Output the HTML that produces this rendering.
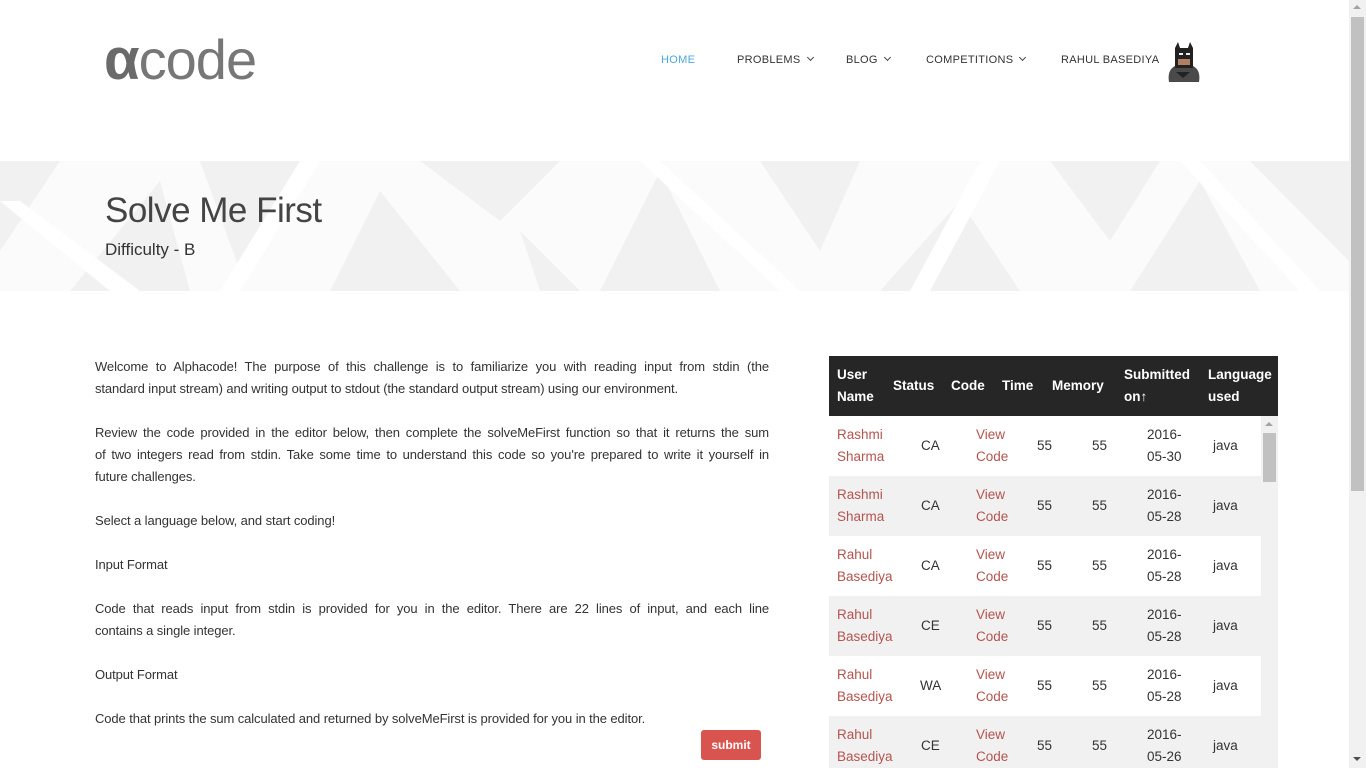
<!DOCTYPE html>
<html style="overflow:hidden"><head><meta charset="utf-8"><style>
*{margin:0;padding:0;box-sizing:border-box}
body{width:1366px;height:768px;overflow:hidden;background:#fff;font-family:"Liberation Sans",sans-serif;color:#333;position:relative}
.abs{position:absolute}
.logo{left:104px;top:26px;font-size:56px;color:#777;font-weight:normal;letter-spacing:-1px}
.logo b{font-weight:bold;font-size:58px;color:#6a6a6a}
.nav{top:54px;font-size:11px;color:#333;letter-spacing:0.3px}
.chev{display:inline-block;width:5px;height:5px;border-right:1px solid #444;border-bottom:1px solid #444;transform:rotate(45deg);margin-left:7px;position:relative;top:-3px}
.hero{left:0;top:161px;width:1349px;height:130px;background:#fbfbfb;overflow:hidden}
.desc{left:95px;top:356px;width:674px;font-size:13px;line-height:22px;color:#333;letter-spacing:-0.1px}
.desc p{margin-bottom:22px}
.j{display:block;text-align:justify;text-align-last:justify;white-space:nowrap}
.thead{left:829px;top:356px;width:449px;height:60px;background:#262626;color:#fff;font-weight:bold;font-size:13.5px;line-height:22px}
.thead div{position:absolute}
.row{position:absolute;left:829px;width:432px;height:60px;font-size:13.5px;line-height:22px;color:#333}
.row div{position:absolute}
.red{color:#b5544f}
.sb{left:1261px;top:416px;width:17px;height:352px;background:#f1f1f1}
.psb{left:1349px;top:0;width:17px;height:768px;background:#f1f1f1}
</style></head><body>
<div class="abs logo"><b>α</b>code</div>
<div class="abs nav" style="left:661px;color:#4aa8e0">HOME</div>
<div class="abs nav" style="left:737px">PROBLEMS<span class="chev"></span></div>
<div class="abs nav" style="left:846px">BLOG<span class="chev"></span></div>
<div class="abs nav" style="left:926px">COMPETITIONS<span class="chev"></span></div>
<div class="abs nav" style="left:1061px">RAHUL BASEDIYA</div>
<svg class="abs" style="left:1163px;top:42px" width="42" height="40" viewBox="0 0 42 40">
<path d="M6 40 Q4 28 12 24 L30 24 Q38 28 36 40Z" fill="#4a4a4a"/>
<path d="M13 30 L20 36 L27 30Z" fill="#222"/>
<path d="M12 26 L12 6 L15 0 L17 6 L25 6 L27 0 L30 6 L30 26Z" fill="#222"/>
<rect x="15" y="17" width="12" height="6" fill="#b08060"/>
<rect x="16" y="11" width="4" height="2" fill="#eee"/><rect x="23" y="11" width="4" height="2" fill="#eee"/>
</svg>
<div class="abs hero">
<svg width="1349" height="130">
<g fill="#f1f1f1">
<polygon points="0,0 60,0 0,90"/><polygon points="70,130 160,20 190,130"/><polygon points="200,0 300,0 240,110"/>
<polygon points="330,130 380,30 460,130"/><polygon points="420,0 560,0 500,60"/><polygon points="600,130 660,10 720,130"/>
<polygon points="760,0 860,0 820,90"/><polygon points="880,130 960,40 1020,130"/><polygon points="1050,0 1160,0 1110,80"/>
<polygon points="1130,130 1200,20 1260,130"/><polygon points="1250,0 1349,0 1349,100"/><polygon points="540,130 520,70 580,130"/>
</g>
<g fill="#fff">
<polygon points="0,40 20,40 140,130 110,130"/><polygon points="300,0 320,0 240,130 220,130"/><polygon points="640,0 660,0 800,130 780,130"/><polygon points="980,0 1000,0 930,130 910,130"/><polygon points="1180,0 1200,0 1320,130 1300,130"/>
</g>
</svg>
<div class="abs" style="left:105px;top:30px;font-size:35px;color:#444;letter-spacing:-0.5px">Solve Me First</div>
<div class="abs" style="left:105px;top:79px;font-size:17px;color:#333">Difficulty - B</div>
</div>
<div class="abs desc">
<p><span class="j">Welcome to Alphacode! The purpose of this challenge is to familiarize you with reading input from stdin (the</span>standard input stream) and writing output to stdout (the standard output stream) using our environment.</p>
<p><span class="j">Review the code provided in the editor below, then complete the solveMeFirst function so that it returns the sum</span><span class="j">of two integers read from stdin. Take some time to understand this code so you're prepared to write it yourself in</span>future challenges.</p>
<p>Select a language below, and start coding!</p>
<p>Input Format</p>
<p><span class="j">Code that reads input from stdin is provided for you in the editor. There are 22 lines of input, and each line</span>contains a single integer.</p>
<p>Output Format</p>
<p>Code that prints the sum calculated and returned by solveMeFirst is provided for you in the editor.</p>
</div>
<div class="abs" style="left:701px;top:730px;width:60px;height:30px;background:#d9534f;color:#fff;font-size:12px;font-weight:bold;text-align:center;line-height:30px;border-radius:3px">submit</div>
<div class="abs thead">
<div style="left:8px;top:8px">User<br>Name</div>
<div style="left:64px;top:19px">Status</div>
<div style="left:122px;top:19px">Code</div>
<div style="left:173px;top:19px">Time</div>
<div style="left:223px;top:19px">Memory</div>
<div style="left:295px;top:8px">Submitted<br>on↑</div>
<div style="left:379px;top:8px">Language<br>used</div>
</div>
<div class="row" style="top:416px;background:#fff"><div class="red" style="left:8px;top:8px">Rashmi<br>Sharma</div><div style="left:92px;top:19px">CA</div><div class="red" style="left:147px;top:8px">View<br>Code</div><div style="left:208px;top:19px">55</div><div style="left:263px;top:19px">55</div><div style="left:318px;top:8px;text-align:center">2016-<br>05-30</div><div style="left:384px;top:19px">java</div></div>
<div class="row" style="top:476px;background:#f1f1f1"><div class="red" style="left:8px;top:8px">Rashmi<br>Sharma</div><div style="left:92px;top:19px">CA</div><div class="red" style="left:147px;top:8px">View<br>Code</div><div style="left:208px;top:19px">55</div><div style="left:263px;top:19px">55</div><div style="left:318px;top:8px;text-align:center">2016-<br>05-28</div><div style="left:384px;top:19px">java</div></div>
<div class="row" style="top:536px;background:#fff"><div class="red" style="left:8px;top:8px">Rahul<br>Basediya</div><div style="left:92px;top:19px">CA</div><div class="red" style="left:147px;top:8px">View<br>Code</div><div style="left:208px;top:19px">55</div><div style="left:263px;top:19px">55</div><div style="left:318px;top:8px;text-align:center">2016-<br>05-28</div><div style="left:384px;top:19px">java</div></div>
<div class="row" style="top:596px;background:#f1f1f1"><div class="red" style="left:8px;top:8px">Rahul<br>Basediya</div><div style="left:92px;top:19px">CE</div><div class="red" style="left:147px;top:8px">View<br>Code</div><div style="left:208px;top:19px">55</div><div style="left:263px;top:19px">55</div><div style="left:318px;top:8px;text-align:center">2016-<br>05-28</div><div style="left:384px;top:19px">java</div></div>
<div class="row" style="top:656px;background:#fff"><div class="red" style="left:8px;top:8px">Rahul<br>Basediya</div><div style="left:91px;top:19px">WA</div><div class="red" style="left:147px;top:8px">View<br>Code</div><div style="left:208px;top:19px">55</div><div style="left:263px;top:19px">55</div><div style="left:318px;top:8px;text-align:center">2016-<br>05-28</div><div style="left:384px;top:19px">java</div></div>
<div class="row" style="top:716px;height:52px;background:#f1f1f1;overflow:hidden"><div class="red" style="left:8px;top:8px">Rahul<br>Basediya</div><div style="left:92px;top:19px">CE</div><div class="red" style="left:147px;top:8px">View<br>Code</div><div style="left:208px;top:19px">55</div><div style="left:263px;top:19px">55</div><div style="left:318px;top:8px;text-align:center">2016-<br>05-26</div><div style="left:384px;top:19px">java</div></div>
<div class="abs sb"><div class="abs" style="left:4px;top:6px;border:4px solid transparent;border-bottom:4px solid #a3a3a3;border-top:0"></div><div class="abs" style="left:2px;top:17px;width:13px;height:49px;background:#c1c1c1"></div></div>
<div class="abs psb"><div class="abs" style="left:4px;top:5px;border:4px solid transparent;border-bottom:4px solid #a3a3a3;border-top:0"></div><div class="abs" style="left:2px;top:17px;width:13px;height:474px;background:#c1c1c1"></div><div class="abs" style="left:4px;top:757px;border:4px solid transparent;border-top:4px solid #505050;border-bottom:0"></div></div>
</body></html>
